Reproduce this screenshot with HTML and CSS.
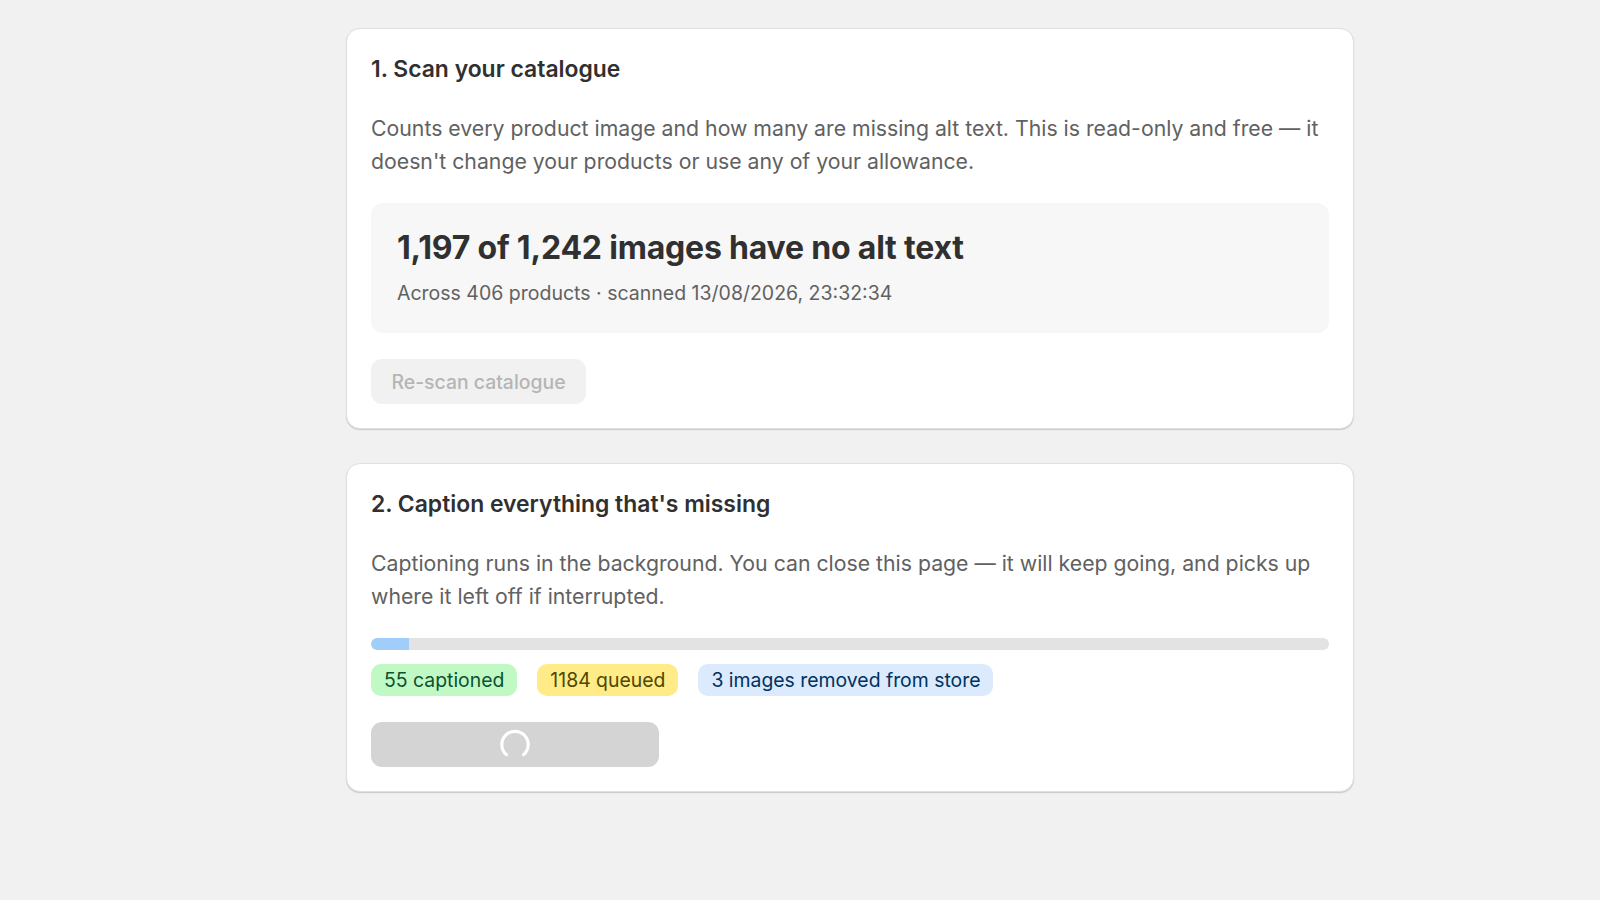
FILE: index.html
```
<!DOCTYPE html>
<html lang="en">
<head>
<meta charset="utf-8">
<title>Alt text</title>
<link rel="stylesheet" href="styles.css">
</head>
<body>
<main class="page">
  <section class="card">
    <h2 class="card-title">1. Scan your catalogue</h2>
    <p class="card-text">Counts every product image and how many are missing alt text. This is read-only and free — it doesn't change your products or use any of your allowance.</p>
    <div class="stat-box">
      <div class="stat-main">1,197 of 1,242 images have no alt text</div>
      <div class="stat-sub">Across 406 products · scanned 13/08/2026, 23:32:34</div>
    </div>
    <div class="actions">
      <button class="btn btn-disabled" type="button">Re-scan catalogue</button>
    </div>
  </section>

  <section class="card">
    <h2 class="card-title">2. Caption everything that's missing</h2>
    <p class="card-text">Captioning runs in the background. You can close this page — it will keep going, and picks up where it left off if interrupted.</p>
    <div class="progress"><div class="progress-fill" style="width:4%"></div></div>
    <div class="badges">
      <span class="badge badge-green">55 captioned</span>
      <span class="badge badge-yellow">1184 queued</span>
      <span class="badge badge-blue">3 images removed from store</span>
    </div>
    <div class="actions">
      <button class="btn btn-loading" type="button" aria-label="Loading">
        <svg class="spinner" width="32" height="32" viewBox="0 0 32 32"><path d="M7.4 25.6 A13.2 13.2 0 1 1 24.6 25.6" fill="none" stroke="#ffffff" stroke-width="3.2" stroke-linecap="round"/></svg>
      </button>
    </div>
  </section>
</main>
</body>
</html>
```

FILE: styles.css
```
* { box-sizing: border-box; }
html, body { margin: 0; padding: 0; }
body {
  background: #f1f1f1;
  font-family: Inter, "Noto Sans", "Liberation Sans", sans-serif;
  color: #303030;
  width: 1600px;
  height: 900px;
  overflow: hidden;
}
.page {
  width: 1008px;
  margin-left: 346px;
  padding-top: 28px;
  display: flex;
  flex-direction: column;
  gap: 34px;
}
.card {
  background: #ffffff;
  border: 1px solid #e0e0e0;
  border-radius: 14px;
  box-shadow: 0 1px 1px rgba(0,0,0,0.12), 0 1px 2px rgba(0,0,0,0.06);
  padding: 24px;
  display: flex;
  flex-direction: column;
}
.card-title {
  margin: 0;
  font-size: 22.9px;
  font-weight: 600;
  line-height: 33px;
  color: #303030;
}
.card-text {
  margin: 26px 0 0;
  font-size: 21.25px;
  line-height: 32.7px;
  color: #616161;
}
.stat-box {
  margin-top: 26px;
  background: #f7f7f7;
  border-radius: 12px;
  padding: 25px 26px 26px;
  height: 129.5px;
}
.stat-main {
  font-size: 32px;
  font-weight: 700;
  line-height: 40px;
  color: #303030;
  letter-spacing: -0.2px;
}
.stat-sub {
  margin-top: 13px;
  font-size: 19.5px;
  line-height: 24px;
  color: #616161;
}
.actions {
  margin-top: 26.5px;
  display: flex;
}
.btn {
  font-family: inherit;
  border: none;
  border-radius: 11px;
  height: 45px;
  font-size: 19.4px;
  display: flex;
  align-items: center;
  justify-content: center;
}
.btn-disabled {
  background: #f1f1f1;
  color: #b5b5b5;
  padding: 0 20px;
  width: 215px;
  font-weight: 500;
}
.btn-loading {
  background: #d4d4d4;
  width: 288px;
}
.progress {
  margin-top: 25px;
  height: 12px;
  background: #e3e3e3;
  border-radius: 6px;
  overflow: hidden;
}
.progress-fill {
  height: 100%;
  background: #a0cdfa;
  border-radius: 6px 0 0 6px;
}
.badges {
  margin-top: 14px;
  display: flex;
  gap: 20px;
}
.badge {
  height: 32px;
  padding: 0 13px;
  border-radius: 10px;
  font-size: 19.4px;
  line-height: 32px;
  display: inline-flex;
  align-items: center;
}
.badge-green { background: #c1f9c5; color: #0c5132; }
.badge-yellow { background: #ffeb87; color: #4f4700; }
.badge-blue { background: #dbeafd; color: #00325e; }
.spinner { display: block; }
```
